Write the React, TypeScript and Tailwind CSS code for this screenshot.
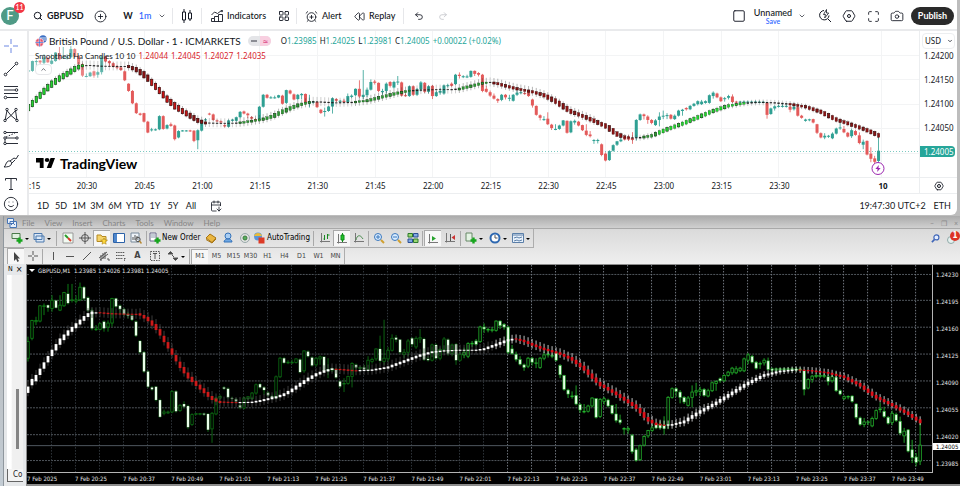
import React from "react";
import clsx from "clsx";
import {
  AlarmClockPlus,
  Camera,
  CalendarArrowDown,
  ChevronDown,
  ChevronUp,
  CirclePlus,
  Hexagon,
  LayoutGrid,
  Maximize,
  Redo2,
  Rewind,
  Search,
  Smile,
  Square,
  Undo2,
} from "lucide-react";

type Candle = [open: number, close: number, high: number, low: number];

// One minute candles, GBPUSD. Levels are counted downwards from the top of the chart,
// so a close smaller than the open is a rising candle.
const CANDLES: Candle[] = [
  [290, 240, 225, 300], [230, 176, 174, 236], [180, 176, 165, 190], [178, 132, 130, 182], [134, 132, 125, 160], [130, 138, 128, 150],
  [140, 115, 100, 150], [116, 138, 114, 140], [145, 130, 100, 148], [132, 92, 90, 135], [96, 124, 66, 128], [116, 114, 66, 122],
  [118, 114, 100, 125], [114, 76, 62, 118], [76, 110, 72, 116], [108, 146, 104, 150], [146, 200, 140, 206], [204, 202, 190, 208],
  [203, 186, 182, 206], [180, 200, 176, 210], [196, 184, 176, 210], [184, 110, 108, 195], [110, 134, 108, 138], [132, 142, 128, 155],
  [142, 158, 138, 162], [158, 162, 150, 170], [162, 174, 158, 178], [180, 222, 176, 226], [238, 272, 236, 276], [272, 330, 268, 334],
  [330, 376, 326, 380], [378, 384, 374, 388], [376, 416, 374, 420], [416, 467, 412, 470], [456, 452, 445, 462], [455, 452, 448, 458],
  [452, 390, 386, 456], [390, 450, 386, 454], [448, 432, 428, 452], [428, 436, 420, 440], [434, 498, 430, 504], [490, 460, 456, 494],
  [459, 457, 455, 462], [459, 457, 455, 462], [457, 460, 454, 464], [458, 506, 456, 512], [503, 456, 452, 545], [458, 410, 408, 462],
  [410, 405, 400, 414], [378, 382, 374, 386], [382, 408, 378, 412], [410, 412, 406, 418], [414, 420, 410, 424], [432, 438, 428, 444],
  [440, 410, 406, 444], [412, 406, 404, 416], [412, 395, 392, 416], [395, 370, 366, 400], [368, 378, 364, 382], [378, 386, 374, 400],
  [394, 402, 390, 406], [404, 410, 400, 414], [408, 346, 342, 414], [346, 290, 286, 350], [290, 304, 286, 308], [304, 302, 296, 308],
  [304, 302, 294, 308], [303, 292, 290, 306], [294, 332, 290, 336], [328, 268, 266, 334], [270, 284, 266, 288], [288, 312, 284, 316],
  [310, 290, 286, 316], [292, 286, 282, 310], [286, 328, 284, 334], [327, 325, 290, 350], [326, 322, 318, 332], [324, 348, 320, 352],
  [360, 375, 356, 380], [368, 366, 350, 392], [366, 345, 342, 370], [345, 306, 302, 378], [310, 318, 306, 324], [321, 318, 314, 330],
  [318, 324, 310, 328], [324, 296, 284, 330], [300, 294, 288, 306], [292, 262, 260, 298], [262, 298, 222, 304], [300, 290, 174, 310],
  [292, 266, 256, 300], [266, 230, 218, 270], [228, 234, 220, 242], [234, 272, 232, 278], [278, 272, 262, 290], [272, 238, 232, 284],
  [230, 248, 226, 256], [256, 230, 224, 262], [232, 228, 202, 244], [232, 294, 228, 298], [292, 296, 284, 300], [296, 250, 246, 300],
  [250, 290, 246, 296], [290, 264, 258, 296], [264, 232, 226, 274], [234, 276, 230, 282], [276, 250, 246, 284], [248, 296, 244, 310],
  [296, 278, 270, 300], [280, 272, 258, 290], [284, 246, 242, 290], [247, 245, 238, 256], [238, 248, 232, 252], [240, 196, 192, 244],
  [196, 202, 185, 214], [205, 203, 198, 212], [206, 204, 196, 212], [206, 178, 176, 210], [178, 192, 176, 202], [188, 196, 184, 204],
  [196, 272, 192, 278], [262, 276, 250, 280], [278, 294, 270, 300], [294, 308, 284, 312], [310, 318, 306, 328], [314, 290, 286, 320],
  [290, 302, 286, 312], [306, 304, 290, 320], [318, 290, 286, 322], [290, 280, 270, 296], [280, 278, 268, 288], [282, 284, 276, 290],
  [274, 296, 270, 300], [312, 340, 308, 350], [342, 384, 340, 388], [386, 398, 382, 410], [406, 404, 390, 412], [402, 428, 372, 432],
  [430, 446, 426, 455], [452, 450, 428, 456], [450, 434, 430, 454], [434, 410, 408, 438], [412, 468, 410, 472], [466, 414, 410, 470],
  [420, 412, 406, 430], [416, 434, 412, 438], [432, 456, 430, 460], [458, 478, 428, 484], [476, 484, 460, 490], [504, 502, 498, 520],
  [506, 502, 496, 518], [522, 572, 518, 578], [566, 598, 560, 602], [596, 554, 550, 600], [552, 526, 522, 556], [524, 508, 506, 530],
  [508, 500, 490, 512], [488, 500, 484, 504], [490, 500, 480, 506], [492, 502, 465, 520], [490, 408, 404, 504], [408, 382, 378, 412],
  [382, 390, 378, 406], [392, 408, 386, 426], [408, 422, 404, 428], [432, 410, 404, 436], [408, 392, 372, 438], [392, 388, 364, 404],
  [390, 385, 376, 404], [384, 402, 380, 406], [404, 388, 382, 408], [388, 364, 360, 392], [366, 360, 356, 388], [352, 358, 348, 364],
  [358, 342, 338, 362], [342, 332, 328, 346], [334, 320, 316, 340], [334, 322, 314, 338], [328, 320, 316, 332], [328, 292, 288, 332],
  [296, 280, 274, 308], [284, 302, 280, 306], [302, 320, 298, 324], [308, 306, 300, 322], [304, 296, 290, 312], [298, 324, 288, 328],
  [322, 326, 318, 334], [326, 322, 318, 332], [325, 322, 318, 332], [325, 322, 318, 332], [324, 322, 318, 330], [325, 322, 317, 330],
  [325, 323, 317, 330], [325, 323, 318, 330], [328, 384, 324, 402], [380, 354, 350, 384], [354, 344, 340, 364], [345, 342, 336, 350],
  [345, 342, 334, 350], [345, 342, 336, 350], [346, 360, 340, 372], [358, 346, 338, 364], [348, 388, 332, 392], [388, 398, 384, 402],
  [412, 406, 402, 416], [407, 405, 402, 414], [404, 420, 402, 424], [428, 468, 426, 474], [470, 490, 466, 494], [490, 482, 470, 498],
  [484, 482, 478, 492], [494, 472, 466, 498], [472, 448, 444, 476], [445, 443, 424, 454], [450, 466, 436, 470], [468, 486, 464, 490],
  [484, 456, 448, 492], [460, 478, 454, 482], [480, 516, 466, 522], [524, 510, 500, 545], [506, 570, 504, 574], [566, 590, 536, 606],
  [588, 604, 576, 616], [600, 552, 475, 612],
];

// Smoothed Heiken Ashi line, [minute, level]
const SMOOTHED: [number, number][] = [
  [0, 385], [1, 362], [2, 350], [4, 312], [6, 274], [8, 240], [10, 214], [12, 192], [14, 170], [15, 160], [16, 154], [18, 153],
  [21, 156], [24, 157], [28, 158], [30, 172], [31, 184], [32, 196], [33, 212], [34, 232], [36, 270], [38, 310], [40, 342], [42, 366],
  [44, 388], [46, 410], [48, 422], [52, 424], [56, 423], [58, 419], [62, 408], [64, 400], [66, 387], [68, 370], [70, 354], [72, 340],
  [74, 330], [76, 323], [78, 324], [82, 328], [86, 326], [90, 318], [94, 300], [98, 282], [101, 272], [104, 268], [108, 266], [112, 266],
  [114, 263], [117, 250], [120, 236], [122, 232], [124, 238], [126, 248], [129, 262], [133, 276], [136, 292], [139, 320], [143, 368],
  [147, 396], [150, 420], [152, 436], [153, 448], [155, 474], [157, 488], [159, 492], [161, 491], [164, 482], [168, 452], [172, 426],
  [176, 396], [180, 366], [184, 342], [188, 330], [192, 325], [196, 328], [200, 334], [204, 346], [208, 370], [212, 406], [216, 430],
  [220, 456], [223, 480],
];

const smoothedAt = (minute: number) => {
  let i = 1;
  while (i < SMOOTHED.length - 1 && SMOOTHED[i][0] < minute) i++;
  const [x0, y0] = SMOOTHED[i - 1];
  const [x1, y1] = SMOOTHED[i];
  return y0 + ((minute - x0) / (x1 - x0)) * (y1 - y0);
};

const slopeAt = (minute: number) => (smoothedAt(minute + 1) - smoothedAt(minute - 1)) / 2;

/* ---------- TradingView ---------- */

const TV_TIMES = ["20:30", "20:45", "21:00", "21:15", "21:30", "21:45", "22:00", "22:15", "22:30", "22:45", "23:00", "23:15", "23:30"];

const TradingViewChart = () => {
  const px = (i: number) => i * 3.846 - 8.1;
  const py = (level: number) => 1.9 + level * 0.2134;

  return (
    <svg viewBox="0 0 890 146" preserveAspectRatio="none" className="block h-[146px] w-full" aria-label="GBPUSD chart">
      {[24, 48, 73, 97, 122].map((y) => (
        <line key={y} x1="0" x2="890" y1={y + 0.5} y2={y + 0.5} stroke="#f3f4f5" />
      ))}
      {Array.from({ length: 13 }, (_, i) => Math.round(58 + i * 57.7)).concat(853).map((x) => (
        <line key={x} x1={x - 0.5} x2={x - 0.5} y1="0" y2="146" stroke="#f3f4f5" />
      ))}
      <line x1="0" x2="890" y1="120.5" y2="120.5" stroke="#26a69a" strokeOpacity="0.6" strokeDasharray="1 2" />

      {CANDLES.map(([open, close, high, low], i) => {
        if (i < 2) return null;
        const color = close < open ? "#2fa093" : "#e35a5a";
        const top = py(Math.min(open, close));
        const height = Math.max(1, py(Math.max(open, close)) - top);
        return (
          <g key={i} fill={color} opacity={i < 22 ? 0.75 : 1}>
            <rect x={px(i) - 0.4} y={py(high)} width="0.8" height={py(low) - py(high)} />
            <rect x={px(i) - 1.5} y={top} width="3" height={height} />
          </g>
        );
      })}

      {CANDLES.map((_, i) => {
        if (i < 2) return null;
        const slope = slopeAt(i);
        const steep = Math.abs(slope);
        const half = Math.min(3.2, 0.4 + steep * 0.2);
        const y = py(smoothedAt(i));
        const flat = steep < 2;
        let fill = "#222222";
        if (!flat) fill = slope < 0 ? (i < 20 || i > 165 ? "#22d62e" : "#2f9a34") : i > 33 && i < 44 ? "#c81414" : "#8c1414";
        const outlined = i < 55 || i % 3 === 0;
        return (
          <g key={i}>
            <line x1={px(i)} x2={px(i)} y1={y - (i < 150 ? 5 : 3)} y2={y + (i < 150 ? 4 : 3)} stroke="#333" strokeWidth="0.6" strokeOpacity={flat ? 0.4 : 0.6} />
            <rect
              x={px(i) - 1.2}
              y={y - half}
              width="2.4"
              height={half * 2}
              fill={fill}
              stroke={slope > 0 ? "#2a0505" : "#0c3a0f"}
              strokeWidth={flat ? 0 : outlined ? 0.6 : 0.3}
            />
          </g>
        );
      })}
    </svg>
  );
};

const TvSeparator = () => <span className="h-4 w-px shrink-0 bg-[#e6e7ea]" />;

interface TvButtonProps {
  label?: string;
  className: string;
  start?: boolean;
  children: React.ReactNode;
}

const TvButton = ({ label, className, start, children }: TvButtonProps) => (
  <button
    aria-label={label}
    className={clsx("flex shrink-0 items-center gap-1 whitespace-nowrap", start ? "justify-start" : "justify-center", className)}
  >
    {children}
  </button>
);

const CandlesIcon = () => (
  <svg viewBox="0 0 12 14" className="h-[14px] w-3" fill="none" stroke="currentColor">
    <path d="M3 0v3M3 11v3M9 1v3M9 10v2" />
    <path d="M1.5 3h3v8h-3zM7.500 4h3v6h-3z" />
  </svg>
);

const IndicatorsIcon = () => (
  <svg viewBox="0 0 12 12" className="h-3 w-3" fill="none" stroke="currentColor" strokeWidth=".9">
    <path d="M.5 11.500v-3h3v-2h4v-2h4v7zM3.500 8.500v3M7.500 6.500v5" />
    <path d="M.5 5l3-3 3 1.500 4-3" />
    <circle cx="11" cy="1" r=".8" />
  </svg>
);

const FlashSearchIcon = () => (
  <svg viewBox="0 0 14 14" className="h-[14px] w-[14px]" fill="none" stroke="currentColor">
    <path d="M6 1.500a4.700 4.700 0 1 0 5 5M10 10l3 3" />
    <path d="M8.500.5L5.500 5.500h2l-.8 3.500 4-5h-2.200z" strokeWidth=".8" />
  </svg>
);

const TvHeader = () => (
  <header className="flex h-[31px] items-center border-b-2 border-[#e9eaec] pt-[3px] font-['Lato',sans-serif] text-[9px] font-medium text-[#131722]">
    <div className="relative mr-[6px] h-[18px] w-[27px] shrink-0">
      <span className="ml-[1px] flex h-[18px] w-[18px] items-center justify-center rounded-full bg-[#4f9a86] text-[13px] text-white">F</span>
      <span className="absolute -top-[5px] left-[14px] flex h-[11px] w-[11px] items-center justify-center rounded-full bg-[#f23645] text-[7px] text-white">11</span>
    </div>
    <TvButton start className="w-[46px] font-bold">
      <Search size={10} strokeWidth={2.4} className="shrink-0" />
      GBPUSD
    </TvButton>
    <TvButton label="Compare" className="mx-[9px] w-6"><CirclePlus size={13} strokeWidth={1.6} /></TvButton>
    <TvButton className="w-[14px] font-bold">W</TvButton>
    <TvButton className="w-[20px] text-[#2962ff]">1m</TvButton>
    <TvButton label="Intervals" className="mr-[3px] w-[14px]"><ChevronDown size={8} /></TvButton>
    <TvSeparator />
    <TvButton label="Candles" className="w-[28px]"><CandlesIcon /></TvButton>
    <TvSeparator />
    <TvButton start className="ml-[9px] mr-[4px] w-[59px]"><IndicatorsIcon />Indicators</TvButton>
    <TvButton label="Templates" className="mr-[3px] w-[19px]"><LayoutGrid size={12} strokeWidth={1.8} /></TvButton>
    <TvSeparator />
    <TvButton start className="ml-[8px] mr-[9px] w-[40px]"><AlarmClockPlus size={13} strokeWidth={1.6} />Alert</TvButton>
    <TvButton start className="mr-[3px] w-[46px]"><Rewind size={11} strokeWidth={1.8} className="shrink-0" />Replay</TvButton>
    <TvSeparator />
    <TvButton label="Undo" className="ml-[3px] w-6"><Undo2 size={10} strokeWidth={2} /></TvButton>
    <TvButton label="Redo" className="w-6 text-[#c4c6cb]"><Redo2 size={10} strokeWidth={2} /></TvButton>

    <div className="ml-auto flex items-center pr-[3px]">
      <TvButton label="Layout" className="w-[18px]"><Square size={14} strokeWidth={1.6} /></TvButton>
      <TvButton className="ml-[5px] mr-[2px] w-[40px] flex-col !gap-0 pt-px">
        <span className="leading-[9px]">Unnamed</span>
        <span className="text-[7px] leading-[8px] text-[#2962ff]">Save</span>
      </TvButton>
      <TvButton label="Layouts menu" className="mr-[4px] w-[14px]"><ChevronDown size={8} /></TvButton>
      <TvButton label="Quick search" className="w-6"><FlashSearchIcon /></TvButton>
      <TvButton label="Settings" className="w-6">
        <span className="relative"><Hexagon size={14} strokeWidth={1.6} className="rotate-90" /><span className="absolute inset-[5px] rounded-full border border-[#131722]" /></span>
      </TvButton>
      <TvButton label="Fullscreen" className="w-6"><Maximize size={13} strokeWidth={1.6} /></TvButton>
      <TvButton label="Snapshot" className="mr-[2px] w-6"><Camera size={14} strokeWidth={1.5} /></TvButton>
      <TvButton className="h-[18px] w-[43px] rounded-full bg-[#2a2a2a] font-bold text-white">Publish</TvButton>
    </div>
  </header>
);

const DRAW_TOOLS: { label: string; art: React.ReactNode }[] = [
  { label: "Cross", art: <path d="M8 1v5M8 10v5M1 8h5M10 8h5" stroke="#5b7be0" /> },
  { label: "Trend line", art: <><path d="M3.500 12.500l9-9" /><circle cx="2.500" cy="13.500" r="1.300" /><circle cx="13.500" cy="2.500" r="1.300" /></> },
  { label: "Fib retracement", art: <><path d="M1 2.500h14M1 6h11M1 9.500h14M4 13.500h11" /><circle cx="13.500" cy="6" r="1.300" fill="#fff" /><circle cx="2.500" cy="13.500" r="1.300" /></> },
  { label: "Patterns", art: <><path d="M2 13.500l2-10 4 5 4.500-5 1.500 10-6-5z" /><circle cx="4" cy="2.500" r="1.200" fill="#fff" /><circle cx="13" cy="2.500" r="1.200" fill="#fff" /><circle cx="2" cy="13.500" r="1.200" fill="#fff" /><circle cx="14" cy="13.500" r="1.200" fill="#fff" /></> },
  { label: "Prediction", art: <><path d="M3 2.500h12M3 8h10M3 13.500h12M2 12V9" /><path d="M3 7l9-4" strokeDasharray="1.500 1.500" /><circle cx="2" cy="2.500" r="1.200" /><circle cx="2" cy="8" r="1.200" /><circle cx="14" cy="8" r="1.200" /><circle cx="2" cy="13.500" r="1.200" /></> },
  { label: "Brush", art: <path d="M1 14c2-1 1.500-5 4.500-6 2-.5 3.500 1 3 3-.7 2.500-4 3-7.500 3zM7 8l4-3 2 1 2.500-4M9 10l3-3" /> },
  { label: "Text", art: <path d="M2.500 4.500v-2h11v2M8 2.500v11M6 13.500h4" /> },
];

const TvSidebar = () => (
  <nav className="flex w-[29px] shrink-0 flex-col items-start border-r-2 border-[#e9eaec] pt-1 text-[#131722]">
    {DRAW_TOOLS.map((tool) => (
      <button key={tool.label} aria-label={tool.label} className="mb-[2px] flex h-[21px] w-[21px] items-center justify-center">
        <svg viewBox="0 0 16 16" className="h-4 w-4" fill="none" stroke="currentColor" strokeWidth=".9">
          {tool.art}
        </svg>
      </button>
    ))}
    <button aria-label="Emoji" className="-mt-px flex h-[18px] w-[21px] items-center justify-center"><Smile size={16} strokeWidth={1.3} /></button>
  </nav>
);

const OHLC = [["O", "1.23985"], ["H", "1.24025"], ["L", "1.23981"], ["C", "1.24005"]];

const TvLegend = () => (
  <div className="absolute left-[6px] top-[3px] text-[#131722]">
    <div className="flex h-[14px] items-center whitespace-nowrap">
      <svg viewBox="0 0 12 12" className="mr-[2px] h-3 w-3">
        <circle cx="8" cy="4" r="3.700" fill="#3c6fc4" />
        <path d="M5 3h6.500M5 5h6.500" stroke="#fff" strokeWidth=".8" />
        <circle cx="4.500" cy="7.500" r="4.200" fill="#e6546a" stroke="#fff" strokeWidth=".6" />
        <path d="M4.500 3.500v8M.5 7.500h8" stroke="#fff" strokeWidth="1.600" />
        <path d="M4.500 3.500v8M.5 7.500h8" stroke="#3f62c8" strokeWidth=".7" />
      </svg>
      <h1 className="font-['Lato',sans-serif] text-[10px]">British Pound / U.S. Dollar · 1 · ICMARKETS</h1>
      <span className="ml-[7px] flex h-[10px] w-[23px] items-center overflow-hidden rounded-full bg-[#e4e5e8]">
        <span className="mx-[3px] h-[2px] w-[6px] bg-[#8b8d94]" />
        <span className="flex h-full flex-1 items-center justify-center bg-[#f8cfe0] text-[9px] leading-none text-[#d6246e]">≈</span>
      </span>
      <dl className="ml-[10px] flex gap-[3px] text-[8px]">
        {OHLC.map(([key, value]) => (
          <div key={key} className="flex">
            <dt>{key}</dt>
            <dd className="text-[#26a69a]">{value}</dd>
          </div>
        ))}
        <dd className="text-[#26a69a]">+0.00022 (+0.02%)</dd>
      </dl>
    </div>
    <div className="flex h-[16px] items-center gap-[3px] whitespace-nowrap text-[8px]">
      <span className="font-['Lato',sans-serif]">Smoothed Ha Candles 10 10</span>
      {["1.24044", "1.24045", "1.24027", "1.24035"].map((v) => (
        <span key={v} className="text-[#d81e2c]">{v}</span>
      ))}
    </div>
    <button aria-label="Collapse legend" className="flex h-[11px] w-[17px] items-center justify-center rounded-sm border border-[#e6e7ea] bg-white/80">
      <ChevronUp size={7} />
    </button>
  </div>
);

const TradingView = () => (
  <section className="flex min-w-0 flex-col rounded-br-md bg-white font-['Noto_Sans','Open_Sans',sans-serif]">
    <TvHeader />
    <div className="flex">
      <TvSidebar />
      <div className="min-w-0 flex-1">
        <div className="flex h-[146px]">
          <div className="relative min-w-0 flex-1">
            <TradingViewChart />
            <TvLegend />
            <div className="absolute bottom-[5px] left-[7px] flex h-[18px] items-center gap-[5px] text-black">
              <svg viewBox="0 0 30 18" className="h-[10px] w-[19px]" preserveAspectRatio="none">
                <path d="M12 18H6V8H0V0h12zM24 18h-7l6-18h7z" />
                <circle cx="17.500" cy="3.700" r="3.700" />
              </svg>
              <span className="font-['Lato',sans-serif] text-[14px] font-bold">TradingView</span>
            </div>
            <span className="absolute bottom-[2px] left-[95.400%] flex h-[13px] w-[13px] -translate-x-1/2 items-center justify-center rounded-full border border-[#9c27b0] bg-white">
              <svg viewBox="0 0 8 8" className="h-[7px] w-[7px]" fill="#9c27b0"><path d="M5 0L1 4.500h2.500L3 8l4-4.500H4.500z" /></svg>
            </span>
          </div>
          <div className="relative w-[38px] shrink-0 border-l border-[#eceef0] text-[8px] text-[#131722]">
            <button className="ml-[2px] mt-[2px] flex h-[16px] w-[33px] items-center justify-between rounded-sm border border-[#eceef0] pl-[2px] pr-[1px]">
              USD <ChevronDown size={6} strokeWidth={3} />
            </button>
            <ul className="-mt-[5px] pl-[4px] leading-6">
              <li>1.24200</li>
              <li>1.24150</li>
              <li>1.24100</li>
              <li>1.24050</li>
            </ul>
            <span className="absolute bottom-[20px] left-0 flex h-[11px] w-[35px] items-center rounded-r-sm bg-[#26a69a] pl-[4px] text-white">1.24005</span>
          </div>
        </div>
        <div className="flex h-[17px] border-y border-[#eceef0] text-[8px] text-[#131722]">
          <div className="flex min-w-0 flex-1 items-center overflow-hidden">
            <span className="w-[3.270%] shrink-0">:15</span>
            {TV_TIMES.map((time) => (
              <span key={time} className="w-[6.484%] shrink-0 text-center">{time}</span>
            ))}
            <span className="w-[12.440%] shrink-0 pl-[7.900%] font-bold">10</span>
          </div>
          <button aria-label="Axis settings" className="flex w-[38px] shrink-0 items-center justify-center border-l border-[#eceef0]">
            <span className="relative"><Hexagon size={10} className="rotate-90" /><span className="absolute inset-[3px] rounded-full border border-[#131722]" /></span>
          </button>
        </div>
        <footer className="flex h-[21px] items-center pl-[5px] pr-[6px] pt-[3px] font-['Lato',sans-serif] text-[9px] text-[#131722]">
          {["1D", "5D", "1M", "3M", "6M", "YTD", "1Y", "5Y", "All"].map((range) => (
            <button key={range} className={clsx("text-center", range === "YTD" ? "w-[22px]" : "w-[18px]")}>{range}</button>
          ))}
          <button aria-label="Go to date" className="ml-[10px]"><CalendarArrowDown size={12} strokeWidth={1.6} /></button>
          <span className="ml-auto">19:47:30 UTC+2</span>
          <span className="ml-2">ETH</span>
        </footer>
      </div>
    </div>
  </section>
);

/* ---------- MetaTrader ---------- */

const MT_LEVELS = [37, 115, 196, 277, 358, 439, 520, 598];
const MT_PRICES = ["1.24230", "1.24195", "1.24160", "1.24125", "1.24090", "1.24055", "1.24020", "1.23985"];
const MT_TIMES = [
  "7 Feb 2025", "7 Feb 20:25", "7 Feb 20:37", "7 Feb 20:49", "7 Feb 21:01", "7 Feb 21:13", "7 Feb 21:25", "7 Feb 21:37", "7 Feb 21:49", "7 Feb 22:01",
  "7 Feb 22:13", "7 Feb 22:25", "7 Feb 22:37", "7 Feb 22:49", "7 Feb 23:01", "7 Feb 23:13", "7 Feb 23:25", "7 Feb 23:37", "7 Feb 23:49",
];

const MetaTraderChart = () => {
  const px = (i: number) => 1 + i * 4.005;
  const py = (level: number) => level / 3 - 3;

  return (
    <svg viewBox="0 0 906 208" preserveAspectRatio="none" className="block h-full w-full" aria-label="GBPUSD,M1 chart">
      {MT_LEVELS.map((level) => (
        <line key={level} x1="0" x2="906" y1={Math.round(py(level)) + 0.5} y2={Math.round(py(level)) + 0.5} stroke="#50565c" strokeDasharray="2 1" />
      ))}
      {Array.from({ length: 37 }, (_, i) => 24.5 + i * 24.03).map((x) => (
        <line key={x} x1={x} x2={x} y1="0" y2="208" stroke={x < 470 ? "#30363c" : "#70767e"} strokeDasharray="1.500 1.500" />
      ))}
      <line x1="0" x2="906" y1="181.500" y2="181.500" stroke="#4e565e" />

      {CANDLES.map(([open, close, high, low], i) => {
        const rising = close < open;
        const line = i > 108 ? "#23b42c" : i < 30 ? "#0f8a17" : "#0c6f13";
        const top = py(Math.min(open, close));
        const bottom = py(Math.max(open, close));
        const height = Math.max(0.6, bottom - top);
        return (
          <g key={i}>
            <line x1={px(i)} x2={px(i)} y1={py(high)} y2={top} stroke={line} strokeWidth="0.9" />
            <line x1={px(i)} x2={px(i)} y1={bottom} y2={py(low)} stroke={line} strokeWidth="0.9" />
            <rect
              x={px(i) - 1.2}
              y={top}
              width="2.4"
              height={height}
              fill={rising ? "#000" : "#eaffea"}
              stroke={line}
              strokeWidth={rising ? 0.8 : i > 108 ? 0.6 : 0.2}
            />
          </g>
        );
      })}

      {CANDLES.map((_, i) => {
        const slope = slopeAt(i);
        const y = py(smoothedAt(i));
        const half = Math.min(3.2, 0.5 + Math.abs(slope) * 0.18);
        const bright = i > 116;
        const reach = half + (i < 116 ? 5 : i < 170 ? 4 : 3);
        return (
          <g key={i}>
            <line x1={px(i)} x2={px(i)} y1={y - reach} y2={y + reach * 0.8} stroke={bright ? "#f0f0f0" : "#4c4c4c"} strokeWidth="0.8" />
            <rect x={px(i) - 1.4} y={y - half} width="2.8" height={half * 2} fill={slope > 0.1 ? (bright ? "#e0101a" : "#cc1a1a") : "#fff"} />
          </g>
        );
      })}
    </svg>
  );
};

interface MtToolProps {
  label: string;
  width?: string;
  pressed?: boolean;
  menu?: boolean;
  children: React.ReactNode;
}

const MtTool = ({ label, width = "w-[17px]", pressed, menu, children }: MtToolProps) => (
  <button
    aria-label={label}
    className={clsx("flex h-4 shrink-0 items-center justify-center gap-[2px]", width, pressed && "border-l border-t border-[#a9a9a9] bg-[#f7f7f7]")}
  >
    <svg viewBox="0 0 12 12" className="h-3 w-3 shrink-0" fill="none" stroke="#555">
      {children}
    </svg>
    {menu && <span className="mt-px border-x-2 border-t-2 border-x-transparent border-t-black" />}
  </button>
);

const MtSeparator = ({ tight }: { tight?: boolean }) => (
  <span className={clsx("h-[15px] w-px shrink-0 bg-[#a9a9a9]", tight ? "mx-px" : "mx-[2px]")} />
);

const Plus = () => <path d="M8.500 5.500v6M5.500 8.500h6" stroke="#16a51d" strokeWidth="2.400" />;
const Axes = () => <path d="M2.500 1v9.500M1 9.500h10" stroke="#777" />;

const MtToolbar = () => (
  <div className="flex h-[19px] w-fit items-center border-b border-r border-[#adadad] pl-[5px] pr-[1px] text-[8px] text-black">
    <MtTool label="New chart" width="w-[21px]" menu><path d="M1 1.500h8v5H1z" fill="#dff0df" stroke="#4a7a4a" /><Plus /></MtTool>
    <MtTool label="Profiles" width="w-[24px]" menu><path d="M1 1.500h8v6H1zM3 4h8v6H3z" fill="#dbe8f7" stroke="#4b78ad" /></MtTool>
    <MtSeparator />
    <MtTool label="Market watch"><path d="M1 1h10v10H1z" fill="#f2fbf2" stroke="#999" /><path d="M3 3l3 3" stroke="#2a9d2a" strokeWidth="2" /><path d="M6 6l3 3" stroke="#db3a2a" strokeWidth="2" /></MtTool>
    <MtTool label="Data window"><circle cx="6" cy="6" r="3.500" /><path d="M6 0v12M0 6h12" /></MtTool>
    <MtTool label="Navigator" pressed><path d="M1 2h4l1 1.500h4v5H1z" fill="#f5d36a" stroke="#b58a22" /><path d="M8 5l1 2 2.500.2-2 1.500.7 2.500L8 10l-2 1.200.6-2.500-2-1.500L7 7z" fill="#ffd83b" stroke="#a88215" strokeWidth=".6" /></MtTool>
    <MtTool label="Terminal"><path d="M.5 1.500h11v9H.5z" fill="#fff" stroke="#2c62a8" /><path d="M1 2h3v8H1z" fill="#4d86cc" stroke="none" /></MtTool>
    <MtTool label="Strategy tester"><path d="M1 1h8v9H1z" fill="#eef3f8" stroke="#789" /><path d="M3 8V5M5 8V3M7 8V4" /><circle cx="8" cy="7.500" r="2.200" /><path d="M9.500 9l2 2.500" stroke="#b78932" strokeWidth="1.500" /></MtTool>
    <MtSeparator />
    <button className="flex h-4 w-[53px] shrink-0 items-center gap-[1px] whitespace-nowrap">
      <svg viewBox="0 0 12 12" className="h-3 w-3 shrink-0"><path d="M1 1h6v8H1z" fill="#fff" stroke="#668" /><path d="M2 3h4M2 5h4" stroke="#89a" /><path d="M8.500 5.500v6M5.500 8.500h6" stroke="#16a51d" strokeWidth="2.400" /></svg>
      New Order
    </button>
    <MtTool label="MetaEditor"><path d="M1 6l4-4 6 4-4 4.500z" fill="#eab640" stroke="#a87412" /><path d="M1 7.500l6 3.500 4-4" stroke="#a87412" /></MtTool>
    <MtTool label="VPS"><circle cx="6" cy="4" r="3" fill="#a9cdf2" stroke="#3572b9" /><path d="M2 10c0-4 8-4 8 0z" fill="#6fa8e4" stroke="#3572b9" /></MtTool>
    <MtTool label="Signals"><circle cx="6" cy="6" r="4.500" stroke="#9aa" /><circle cx="6" cy="6" r="2" fill="#58ad5c" stroke="#3c7d40" /></MtTool>
    <button className="flex h-4 w-[58px] shrink-0 items-center gap-[2px] whitespace-nowrap">
      <svg viewBox="0 0 12 12" className="h-3 w-3 shrink-0"><circle cx="5" cy="4.500" r="4" fill="#5b95d8" /><path d="M1 4c1-4 7-4 8 0z" fill="#e9bb3a" /><path d="M5.500 5.500h6v6h-6z" fill="#dc3a26" /></svg>
      AutoTrading
    </button>
    <MtSeparator />
    <MtTool label="Bar chart"><Axes /><path d="M5.500 3v5M5.500 7h-1M8.500 2v5M8.500 3h2" stroke="#1a8a22" /></MtTool>
    <MtTool label="Candlesticks" pressed><Axes /><path d="M6.500 0v9" stroke="#0a8a14" /><path d="M5 2h3v5H5z" fill="#22c32c" stroke="#0a8a14" /></MtTool>
    <MtTool label="Line chart"><Axes /><path d="M3 8c1-5 4-6 7-1" stroke="#4a8a4e" /></MtTool>
    <MtSeparator tight />
    <MtTool label="Zoom in"><circle cx="5" cy="5" r="3.500" fill="#d9ecff" stroke="#3b78bd" /><path d="M3 5h4M5 3v4" stroke="#3b78bd" /><path d="M8 8l3 3" stroke="#d0a030" strokeWidth="2" /></MtTool>
    <MtTool label="Zoom out"><circle cx="5" cy="5" r="3.500" fill="#d9ecff" stroke="#3b78bd" /><path d="M3 5h4" stroke="#3b78bd" /><path d="M8 8l3 3" stroke="#d0a030" strokeWidth="2" /></MtTool>
    <MtTool label="Tile windows"><path d="M1 1.500h4.500V5H1zM6.500 7H11v3.500H6.500z" fill="#9bd673" stroke="#2d7a2d" /><path d="M6.500 1.500H11V5H6.500zM1 7h4.500v3.500H1z" fill="#7fa9e0" stroke="#2c4f93" /></MtTool>
    <MtSeparator tight />
    <MtTool label="Auto scroll" pressed><Axes /><path d="M5 3l4 2.500L5 8z" fill="#27a32e" stroke="none" /></MtTool>
    <MtTool label="Chart shift"><Axes /><path d="M6.500 2v7" /><path d="M11 3L7.500 5.500 11 8z" fill="#c33" stroke="none" /></MtTool>
    <MtSeparator />
    <MtTool label="Indicators" width="w-[22px]" menu><path d="M1 1h6v8H1z" fill="#e3f3e3" stroke="#686" /><Plus /></MtTool>
    <MtTool label="Periods" width="w-[25px]" menu><circle cx="6" cy="6" r="4.500" fill="#fff" stroke="#2e68b0" strokeWidth="2" /><path d="M6 3v3h2.500" /></MtTool>
    <MtTool label="Templates" width="w-[22px]" menu><path d="M.5 1.500h11v9H.5z" fill="#e8f1fb" stroke="#5b7fa8" /><path d="M.5 3h11M2 6l3-1 2 1 3-1M2 9l3-1 2 1 3-1" stroke="#5b7fa8" /></MtTool>
  </div>
);

const MtDrawBar = () => (
  <div className="flex h-[16px] w-fit items-center border-r border-[#adadad] pl-[3px] text-[7px] text-[#444]">
    <MtTool label="Cursor" pressed><path d="M4 1v9l2-2 1.500 3 1.500-1-1.500-2.500H10z" fill="#444" stroke="none" /></MtTool>
    <MtTool label="Crosshair"><path d="M6 1v4M6 7v4M1 6h4M7 6h4" /></MtTool>
    <MtSeparator tight />
    <MtTool label="Vertical line"><path d="M6.500 2v8" /></MtTool>
    <MtTool label="Horizontal line"><path d="M2 6.500h8" /></MtTool>
    <MtTool label="Trendline"><path d="M2 10l8-8" /></MtTool>
    <MtTool label="Equidistant channel"><path d="M1 8l8-6M2 10l8-6M3 5v6M5 3v6M7 2v7M9 9h2v2" /></MtTool>
    <MtTool label="Fibonacci"><path d="M1 2.500h9M1 5.500h9M1 8.500h7M9 8.500h2M9.500 8v3" strokeDasharray="1.500 .7" /></MtTool>
    <button className="w-[17px] shrink-0 text-[9px] font-bold">A</button>
    <MtTool label="Text label"><path d="M1.500 1.500h9v9h-9z" strokeDasharray="1.500 1" /><path d="M4 3.500h4M6 3.500V9" /></MtTool>
    <MtTool label="Arrows" width="w-[25px]" menu><path d="M1 4l2.500-2.500L6 4zM6 8l2.500 2.500L11 8z" fill="#444" /><path d="M5 5l2 2" /></MtTool>
    <MtSeparator tight />
    {["M1", "M5", "M15", "M30", "H1", "H4", "D1", "W1", "MN"].map((period) => (
      <button
        key={period}
        className={clsx("h-[15px] w-[17px] shrink-0 text-center", period === "M1" && "border-l border-t border-[#a9a9a9] bg-[#f7f7f7]")}
      >
        {period}
      </button>
    ))}
  </div>
);

const MetaTrader = () => (
  <section className="flex min-h-0 flex-1 bg-[#b9c2c9] font-['DejaVu_Sans_Condensed','DejaVu_Sans',sans-serif]">
    <div className="w-[4px] shrink-0 border-r border-[#8f979e] bg-gradient-to-b from-[#b4b4b4] to-[#c3ccd4]" />
    <div className="flex min-w-0 flex-1 flex-col bg-[#ececec]">
      <div className="flex h-[13px] shrink-0 items-center border-b border-[#a9a9a9] bg-gradient-to-b from-[#ababab] to-[#d0d0d0] pl-[3px] pt-[2px] font-['Lato',sans-serif] text-[8px] text-[#858585]">
        <svg viewBox="0 0 10 10" className="mr-[5px] h-[10px] w-[10px]" fill="#e8f0fa" stroke="#4675b5"><path d="M.5.5h6v5h-6zM3 3.500h6.500v6H3z" /><path d="M4 7l2-2 2 2" fill="none" /></svg>
        <nav className="flex gap-[10px]">
          {["File", "View", "Insert", "Charts", "Tools", "Window", "Help"].map((item) => (
            <button key={item}>{item}</button>
          ))}
        </nav>
        <div className="ml-auto flex gap-[7px] pr-[2px] text-[7px] text-[#888]">
          <span>–</span><span>❐</span><span>×</span>
        </div>
      </div>
      <div className="flex shrink-0 justify-between bg-gradient-to-b from-[#dadada] to-[#efefef]">
        <div>
          <MtToolbar />
          <MtDrawBar />
        </div>
        <div className="flex h-[18px] items-center gap-[7px]">
          <button aria-label="Search">
            <svg viewBox="0 0 10 10" className="h-[9px] w-[9px]" fill="none"><circle cx="6" cy="3.800" r="2.800" fill="#e3edff" stroke="#3f66b8" strokeWidth="1.300" /><path d="M4 6L1 9" stroke="#3f66b8" strokeWidth="1.800" /></svg>
          </button>
          <button aria-label="Notifications" className="relative h-3 w-[13px]">
            <span className="absolute bottom-0 left-0 h-2 w-2 rounded-full border border-[#8faaa8] bg-[#e6f0ef]" />
            <span className="absolute -top-[1px] right-0 flex h-[10px] w-[10px] items-center justify-center rounded-full bg-[#dc3325] text-[8px] font-bold leading-none text-white">1</span>
          </button>
        </div>
      </div>

      <div className="flex min-h-0 flex-1">
        <aside className="flex w-[22px] shrink-0 flex-col bg-[#e6e8ea] pl-[3px]">
          <div className="flex h-[11px] items-center gap-[3px] text-[7px] text-black"><span className="pl-[1px]">N</span><span className="text-[9px] leading-none">×</span></div>
          <div className="mr-[3px] flex flex-1 justify-end bg-gradient-to-r from-white from-25% to-[#f0f0f0] to-35% pr-[4px] pt-[114px]">
            <span className="h-[60px] w-[3px] bg-[#858585]" />
          </div>
          <div className="mb-1 mr-[3px] h-[13px] border-b border-l border-[#666] bg-[#f4f4f4] pl-[5px] text-[8px] leading-[12px] text-[#222]">Co</div>
        </aside>
        <div className="relative flex min-w-0 flex-1 flex-col border-b-2 border-l border-t border-[#8c8c8c] bg-black text-[6px] text-[#e6e6e6]">
          <div className="flex min-h-0 flex-1">
            <div className="min-w-0 flex-1 border-b border-r border-[#b4b4b4]">
              <MetaTraderChart />
            </div>
            <div className="relative w-[27px] shrink-0">
              <ul className="-mt-[4px] pl-[3px] leading-[27px]">
                {MT_PRICES.map((price) => (
                  <li key={price} className="h-[12.890%]">{price}</li>
                ))}
              </ul>
              <span className="absolute bottom-[23px] left-0 h-[7px] w-full bg-white pl-[3px] leading-[7px] text-black">1.24005</span>
            </div>
          </div>
          <div className="flex h-[11px] shrink-0 items-center overflow-hidden">
            {MT_TIMES.map((time) => (
              <span key={time} className="w-[5.150%] shrink-0 whitespace-nowrap">{time}</span>
            ))}
          </div>
          <div className="absolute left-[2px] top-[1px] flex items-center gap-[3px] bg-black leading-[9px]">
            <span className="border-x-[3px] border-t-[3px] border-x-transparent border-t-white" />
            <span>GBPUSD,M1&nbsp; 1.23985 1.24026 1.23981 1.24005</span>
          </div>
        </div>
      </div>
    </div>
  </section>
);

export default function App() {
  return (
    <main className="flex h-screen min-h-[486px] flex-col overflow-hidden bg-[#bdbdbd]">
      <div className="shrink-0 bg-[#bdbdbd] pb-px pr-[3px]">
        <TradingView />
      </div>
      <MetaTrader />
    </main>
  );
}
